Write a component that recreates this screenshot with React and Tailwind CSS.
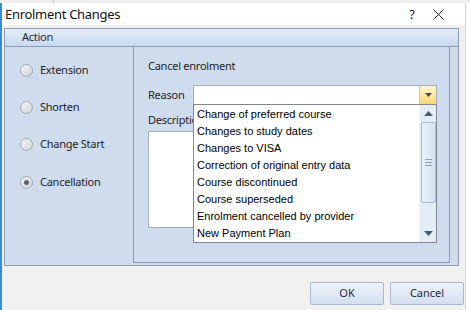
import React from "react";

const items = [
  "Change of preferred course",
  "Changes to study dates",
  "Changes to VISA",
  "Correction of original entry data",
  "Course discontinued",
  "Course superseded",
  "Enrolment cancelled by provider",
  "New Payment Plan",
];

function Radio({ label, checked, extra }) {
  return (
    <div className={"h-[37px] flex items-center " + (extra ? "mt-[1px]" : "")}>
      <div className="w-[13px] h-[13px] rounded-full border border-[#a3a9b2] bg-gradient-to-br from-[#f4f4f4] to-[#d2d5da] flex items-center justify-center">
        {checked && <div className="w-[5px] h-[5px] rounded-full bg-[#55657f]" />}
      </div>
      <span className="ml-[7px] text-[11px] tracking-[-0.25px] text-[#1e1e1e]">{label}</span>
    </div>
  );
}

export default function App() {
  return (
    <div
      className="w-[470px] h-[310px] overflow-hidden bg-white flex flex-col"
      style={{ fontFamily: '"Noto Sans", "Open Sans", sans-serif' }}
    >
      <div className="h-[3px] bg-[#eeeeee] flex">
        <div className="w-[53px]" />
        <div className="w-px bg-[#c8c8c8]" />
      </div>
      <div className="w-[466px] flex-1 flex flex-col border-l-2 border-[#3a8bd2] border-r border-r-[#d4d4d4]">
        {/* title bar */}
        <div className="h-[22px] bg-white flex items-center">
          <span className="ml-[3px] text-[13px] tracking-[-0.3px] leading-none text-[#111]">Enrolment Changes</span>
          <span className="ml-auto text-[13px] leading-none text-[#222] mr-[18px]">?</span>
          <svg width="11" height="11" viewBox="0 0 11 11" className="mr-[21px]">
            <path d="M0.5 0.5 L10.5 10.5 M10.5 0.5 L0.5 10.5" stroke="#222" strokeWidth="1" />
          </svg>
        </div>
        {/* body */}
        <div className="flex-1 bg-[#f0f0f0] pt-[3px] flex flex-col">
          <div className="ml-[2px] w-[455px] h-[238px] border border-[#8b9cb4] flex flex-col">
            <div className="h-[18px] bg-gradient-to-b from-[#e5edf8] to-[#c8d9ef] border-b border-[#8b9cb4] flex items-center">
              <span className="ml-[17px] text-[11px] tracking-[-0.25px] text-[#1e2b3c]">Action</span>
            </div>
            <div className="flex-1 bg-[#cfdcee] flex">
              <div className="w-[128px] pl-[15px] pt-[5px] flex flex-col">
                <Radio label="Extension" />
                <Radio label="Shorten" />
                <Radio label="Change Start" />
                <Radio label="Cancellation" checked extra />
              </div>
              <div className="w-[317px] h-[216px] border-l border-r border-b border-[#8b9cb4] pl-[14px] flex flex-col">
                <div className="mt-[11px] h-[16px] flex items-center text-[11px] tracking-[-0.25px] text-[#1e1e1e]">Cancel enrolment</div>
                <div className="mt-[11px] h-[20px] flex items-center">
                  <span className="w-[45px] text-[11px] tracking-[-0.25px] text-[#1e1e1e]">Reason</span>
                  <div className="relative w-[244px] h-[20px]">
                    <div className="w-full h-full bg-white border border-[#a4afbf] flex justify-end">
                      <div className="w-[17px] h-full bg-gradient-to-b from-[#fff6d0] to-[#fad66a] border-l border-[#e6c870] flex items-center justify-center">
                        <svg width="7" height="4" viewBox="0 0 7 4">
                          <path d="M0 0 H7 L3.5 4 Z" fill="#4a4a4a" />
                        </svg>
                      </div>
                    </div>
                    {/* dropdown list */}
                    <div className="absolute left-0 top-[19px] w-[244px] h-[139px] bg-white border border-[#828790] flex z-10">
                      <div className="flex-1 flex flex-col pt-[1px]" style={{ fontFamily: '"Liberation Sans", Arial, sans-serif' }}>
                        {items.map((t) => (
                          <div key={t} className="h-[17px] flex items-center pl-[3px] text-[11px] text-black whitespace-nowrap">
                            {t}
                          </div>
                        ))}
                      </div>
                      <div className="w-[17px] bg-[#e4ecf6] flex flex-col items-center border-l border-[#eef2f8]">
                        <div className="h-[17px] flex items-center justify-center">
                          <svg width="9" height="5" viewBox="0 0 9 5">
                            <path d="M0 5 L4.5 0 L9 5 Z" fill="#4d5b70" />
                          </svg>
                        </div>
                        <div className="w-[15px] h-[81px] rounded-[2px] border border-[#a8bad3] bg-gradient-to-r from-[#eaf1fa] to-[#d6e2f1] flex flex-col items-center justify-center gap-[2px]">
                          <div className="w-[7px] h-px bg-[#8fa1ba]" />
                          <div className="w-[7px] h-px bg-[#8fa1ba]" />
                          <div className="w-[7px] h-px bg-[#8fa1ba]" />
                        </div>
                        <div className="flex-1" />
                        <div className="h-[17px] flex items-center justify-center">
                          <svg width="9" height="5" viewBox="0 0 9 5">
                            <path d="M0 0 L9 0 L4.5 5 Z" fill="#4d5b70" />
                          </svg>
                        </div>
                      </div>
                    </div>
                  </div>
                </div>
                <div className="mt-[7px] h-[16px] flex items-center text-[11px] tracking-[-0.25px] text-[#1e1e1e]">Description</div>
                <div className="mt-[3px] w-[289px] h-[97px] bg-white border border-[#a4afbf]" />
              </div>
            </div>
          </div>
          <div className="mt-[16px] flex justify-end pr-[1px] gap-[6px]">
            <button className="w-[74px] h-[23px] rounded-[2px] border border-[#a9b9cf] bg-gradient-to-b from-[#edf3fa] to-[#d4e0ef] text-[11px] text-[#1e2b3c]">OK</button>
            <button className="w-[74px] h-[23px] rounded-[2px] border border-[#a9b9cf] bg-gradient-to-b from-[#edf3fa] to-[#d4e0ef] text-[11px] text-[#1e2b3c]">Cancel</button>
          </div>
        </div>
      </div>
    </div>
  );
}
